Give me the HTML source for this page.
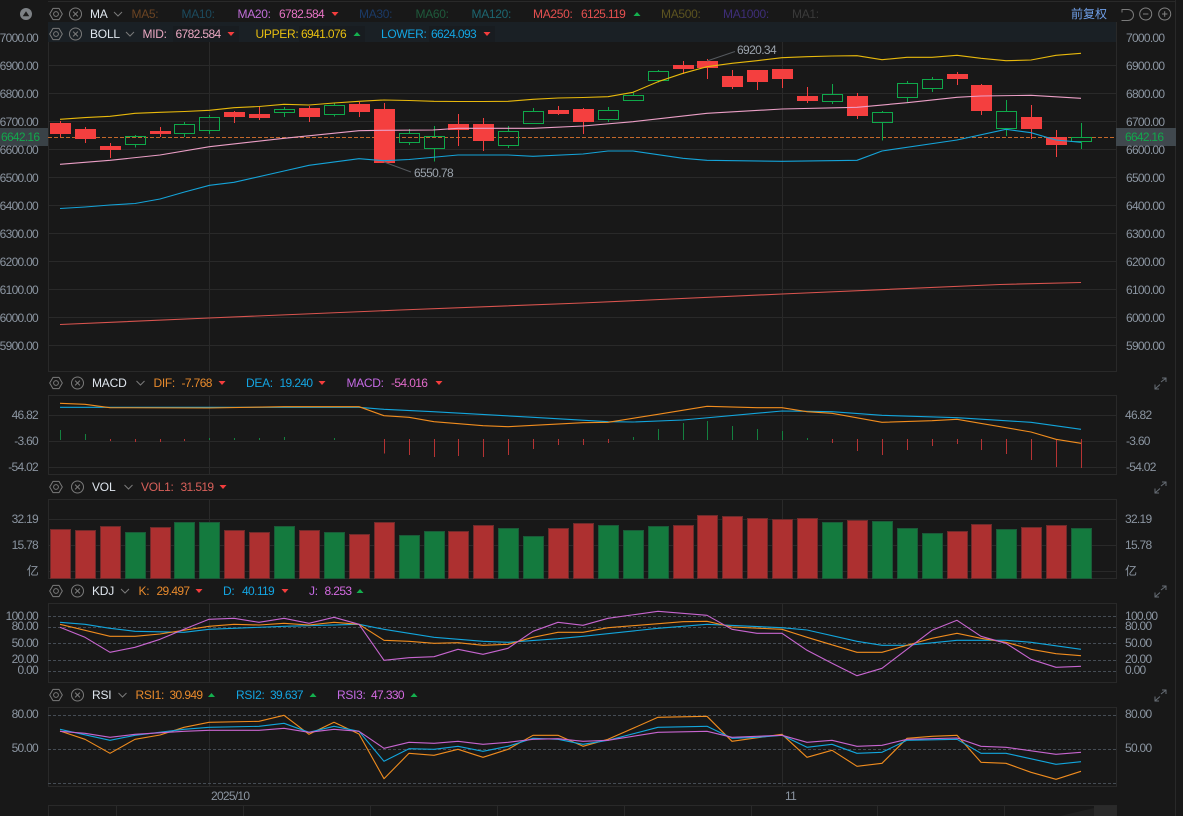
<!DOCTYPE html>
<html><head><meta charset="utf-8"><title>K</title>
<style>
html,body{margin:0;padding:0;background:#181818;width:1183px;height:816px;overflow:hidden}
svg{display:block}
text{font-family:"Liberation Sans","Noto Sans CJK SC",sans-serif;font-size:12px}
.a{fill:#8b95a1;letter-spacing:-.72px}
.e{text-anchor:end}
.n{fill:#dfe6ee;letter-spacing:-.2px}
.l{letter-spacing:-.3px}
.v{letter-spacing:-.62px}
.g{stroke:#292929;stroke-width:1;fill:none;shape-rendering:crispEdges}
.d{stroke:#454c54;stroke-width:1;stroke-dasharray:3 2;fill:none;shape-rendering:crispEdges}
.p{fill:none;stroke-width:1.1;stroke-linejoin:round}
.o{stroke:#f08c1e}.b{stroke:#12a5dc}.m{stroke:#c765cf}
</style></head><body>
<svg width="1183" height="816" viewBox="0 0 1183 816" xmlns="http://www.w3.org/2000/svg">
<defs>
<g id="gear" fill="none" stroke="#7a7a7a" stroke-width="1"><path d="M-3 -5.6 L3 -5.6 L6.3 0 L3 5.6 L-3 5.6 L-6.3 0 Z" stroke-linejoin="round"/><circle r="2.4"/></g>
<g id="close" fill="none" stroke="#7a7a7a" stroke-width="1"><circle r="6"/><path d="M-2.4 -2.4 L2.4 2.4 M2.4 -2.4 L-2.4 2.4"/></g>
<path id="chev" d="M-4 -2 L0 2 L4 -2" fill="none" stroke="#7a7a7a" stroke-width="1"/>
<path id="dn" d="M-3.5 -2 H3.5 L0 2 Z" fill="#f43d3d"/>
<path id="up" d="M-3.5 2 H3.5 L0 -2 Z" fill="#14b04e"/>
<g id="exp" fill="none" stroke="#666d75" stroke-width="1"><path d="M.5 -1.5 L5 -5 M1.5 -5.5 H5.5 V-1.5 M-.5 1 L-5 5 M-5.5 1 V5.5 H-1.5"/></g>
</defs>

<rect width="1183" height="816" fill="#181818"/>
<path class="g" d="M48 1.5H1176M1175.5 0V816" stroke="#222"/>

<!-- BOLL band -->
<rect x="48" y="22" width="1069" height="20" fill="#1a2025"/>
<rect x="173" y="26" width="66" height="16" fill="#181c20"/>
<rect x="299" y="26" width="66" height="16" fill="#181c20"/>
<rect x="429" y="26" width="66" height="16" fill="#181c20"/>

<!-- main grid -->
<path class="g" d="M48.5 42V371M1116.5 22V371M209.5 42V371M782.5 42V371M48 65.5H1116M48 93.5H1116M48 121.5H1116M48 149.5H1116M48 177.5H1116M48 205.5H1116M48 233.5H1116M48 261.5H1116M48 289.5H1116M48 317.5H1116M48 345.5H1116M48 371.5H1117"/>

<!-- price tags -->
<rect x="0" y="128" width="48" height="18" fill="#3a4247"/>
<rect x="1116" y="128" width="60" height="18" fill="#40484e"/>
<path d="M48 137.5H1116" stroke="#c4682a" stroke-width="1" stroke-dasharray="4 2" shape-rendering="crispEdges"/>

<!-- candles -->
<path fill="#f43f3f" shape-rendering="crispEdges" d="M50 123h21v11h-21zM60 121h1v16h-1zM75 129h21v10h-21zM85 127h1v16h-1zM100 146h21v4h-21zM110 143h1v15h-1zM150 131h21v3h-21zM160 127h1v10h-1zM224 112h21v5h-21zM234 111h1v12h-1zM249 114h21v4h-21zM259 107h1v13h-1zM299 108h21v9h-21zM309 106h1v16h-1zM349 104h21v8h-21zM359 102h1v15h-1zM374 109h21v54h-21zM384 103h1v60h-1zM448 124h21v6h-21zM458 114h1v32h-1zM473 124h21v17h-21zM483 118h1v33h-1zM548 110h21v4h-21zM558 106h1v9h-1zM573 109h21v13h-21zM583 108h1v26h-1zM673 65h21v4h-21zM683 61h1v13h-1zM697 61h21v7h-21zM707 59h1v20h-1zM722 76h21v11h-21zM732 70h1v19h-1zM747 70h21v12h-21zM757 70h1v20h-1zM772 69h21v10h-21zM782 69h1v19h-1zM797 96h21v5h-21zM807 87h1v16h-1zM847 96h21v20h-21zM857 93h1v26h-1zM947 74h21v5h-21zM957 72h1v13h-1zM971 85h21v26h-21zM981 84h1v31h-1zM1021 117h21v12h-21zM1031 105h1v34h-1zM1046 137h21v8h-21zM1056 130h1v27h-1z"/>
<path fill="none" stroke="#0fa84a" stroke-width="1" shape-rendering="crispEdges" d="M125.5 136.5h20v8h-20zM135.5 135v1.5M135.5 144.5v3M174.5 124.5h20v9h-20zM184.5 122v2.5M184.5 133.5v3.5M199.5 117.5h20v13h-20zM209.5 115v2.5M209.5 130.5v3.5M274.5 109.5h20v3h-20zM284.5 107v2.5M284.5 112.5v4.5M324.5 105.5h20v9h-20zM334.5 103v2.5M334.5 114.5v2M399.5 133.5h20v9h-20zM409.5 129v4.5M409.5 142.5v2.5M424.5 136.5h20v12h-20zM434.5 126v10.5M434.5 148.5v13M498.5 131.5h20v14h-20zM508.5 126v5.5M508.5 145.5v2.5M523.5 111.5h20v12h-20zM533.5 108v3.5M598.5 110.5h20v9h-20zM608.5 107v3.5M608.5 119.5v2.5M623.5 95.5h20v5h-20zM633.5 92v3.5M648.5 71.5h20v9h-20zM658.5 70v1.5M658.5 80.5v2M822.5 94.5h20v7h-20zM832.5 84v10.5M832.5 101.5v2.5M872.5 112.5h20v10h-20zM882.5 111v1.5M882.5 122.5v18M897.5 83.5h20v14h-20zM907.5 81v2.5M907.5 97.5v4.5M922.5 79.5h20v9h-20zM932.5 77v2.5M932.5 88.5v3.5M996.5 111.5h20v17h-20zM1006.5 100v11.5M1006.5 128.5v7.5M1071.5 137.5h20v4h-20zM1081.5 123v14.5M1081.5 141.5v7.5"/>

<!-- BOLL & MA lines -->
<polyline class="p" stroke="#e8b90c" points="60,119.3 85,117.6 110,116.3 135,113.3 160,112.3 184.5,111.5 209.5,110.3 234,107.7 259,106.5 284,104.3 309,105 334,103 359,101.3 384,100 409,100.5 434,101.3 458,101.5 483,101.5 508,101.3 533,99.3 558,98 583,97.5 608,96.7 633,92.3 658,81.7 683,73.3 707,66.7 732,63.3 757,60.7 782,57.7 807,56.7 832,56 857,55.7 882,59.7 907,57.3 932,57.3 957,55.3 981,58.3 1006,60.7 1031,60 1056,55.3 1081,53.3"/>
<polyline class="p" stroke="#eb9fc6" points="60,164.3 110,160.3 160,155 209.5,146.7 284,138.3 359,130.7 384,130.3 433,130 458,128.3 533,128.3 583,126 633,121.7 707,113.3 782,109 857,107.3 907,102.7 957,97.3 981,96 1031,95.3 1081,98.3"/>
<polyline class="p" stroke="#14a3d8" points="60,208.5 85,207 110,205 135,203.5 160,199 184.5,192 209.5,185.3 234,182.3 284,171 309,165.3 359,158.7 384,160.7 409,159.5 458,155 508,155 533,156.3 583,154 608,151 633,151 683,158.3 707,160.3 782,161.3 857,160.3 882,151 957,140 1006,129.3 1031,132.7 1056,140 1081,142.3"/>
<polyline class="p" stroke="#d9544f" stroke-width="1" points="60,324.5 209,318 400,310 582,303 782,294 1000,284.5 1081,282.5"/>

<!-- annotations -->
<path d="M707 61 L735 51.5 M384 162 L411 172" stroke="#55595e" stroke-width="1" fill="none"/>
<text x="737" y="54" class="v" style="fill:#9aa2ab">6920.34</text>
<text x="414" y="177" class="v" style="fill:#9aa2ab">6550.78</text>

<!-- axis main -->
<g class="a">
<text class="a e" x="38" y="42">7000.00</text><text class="a e" x="38" y="70">6900.00</text><text class="a e" x="38" y="98">6800.00</text><text class="a e" x="38" y="126">6700.00</text><text class="a e" x="38" y="154">6600.00</text><text class="a e" x="38" y="182">6500.00</text><text class="a e" x="38" y="210">6400.00</text><text class="a e" x="38" y="238">6300.00</text><text class="a e" x="38" y="266">6200.00</text><text class="a e" x="38" y="294">6100.00</text><text class="a e" x="38" y="322">6000.00</text><text class="a e" x="38" y="350">5900.00</text>
<text class="a" x="1126" y="42">7000.00</text><text class="a" x="1126" y="70">6900.00</text><text class="a" x="1126" y="98">6800.00</text><text class="a" x="1126" y="126">6700.00</text><text class="a" x="1126" y="154">6600.00</text><text class="a" x="1126" y="182">6500.00</text><text class="a" x="1126" y="210">6400.00</text><text class="a" x="1126" y="238">6300.00</text><text class="a" x="1126" y="266">6200.00</text><text class="a" x="1126" y="294">6100.00</text><text class="a" x="1126" y="322">6000.00</text><text class="a" x="1126" y="350">5900.00</text>
</g>
<text x="1" y="141" style="fill:#12a84c;letter-spacing:-.72px">6642.16</text>
<text x="1125" y="141" style="fill:#12a84c;letter-spacing:-.72px">6642.16</text>

<!-- top bar -->
<circle cx="26" cy="14" r="6" fill="#7d8185"/><path d="M22.7 16.3H29.3L26 11.3Z" fill="#1c1c1c"/>
<use href="#gear" x="56" y="14"/><use href="#close" x="75.5" y="14"/>
<text x="90" y="18" class="n">MA</text><use href="#chev" x="118" y="14"/>
<text x="131.5" y="18" class="l" fill="#6b4423">MA5:</text>
<text x="181.5" y="18" class="l" fill="#1c4b5e">MA10:</text>
<text x="237.5" y="18" class="l" fill="#c06ed8">MA20:</text><text x="279" y="18" class="v" fill="#e774c4">6782.584</text><use href="#dn" x="335" y="14"/>
<text x="359" y="18" class="l" fill="#1b3a66">MA30:</text>
<text x="415.5" y="18" class="l" fill="#1f5a3c">MA60:</text>
<text x="471.5" y="18" class="l" fill="#1d6670">MA120:</text>
<text x="533" y="18" class="l" fill="#e65050">MA250:</text><text x="581" y="18" class="v" fill="#e65050">6125.119</text><use href="#up" x="637" y="14"/>
<text x="661" y="18" class="l" fill="#5c5320">MA500:</text>
<text x="723" y="18" class="l" fill="#3e2e78">MA1000:</text>
<text x="792" y="18" class="l" fill="#3a3a3a">MA1:</text>
<text x="1071" y="18" fill="#6f9fe8">前复权</text>
<path d="M1122 12.5V9.5H1128A5.3 5.3 0 0 1 1128 20.5H1121.5" fill="none" stroke="#7a7a7a" stroke-width="1"/>
<circle cx="1145.7" cy="14" r="6" fill="none" stroke="#808080"/><path d="M1143 14H1148.4" stroke="#808080"/>
<circle cx="1164.7" cy="14" r="6" fill="none" stroke="#808080"/><path d="M1162 14H1167.4M1164.7 11.3V16.7" stroke="#808080"/>

<use href="#gear" x="56" y="34"/><use href="#close" x="75.5" y="34"/>
<text x="90" y="38" class="n">BOLL</text><use href="#chev" x="130" y="34"/>
<text x="142.5" y="38" class="l" fill="#eaa8c2">MID:</text><text x="175.5" y="38" class="v" fill="#eaa8c2">6782.584</text><use href="#dn" x="231" y="34"/>
<text x="255.5" y="38" class="l" fill="#e8bf10">UPPER:</text><text x="301" y="38" class="v" fill="#e8bf10">6941.076</text><use href="#up" x="357" y="34"/>
<text x="381" y="38" class="l" fill="#14a5e2">LOWER:</text><text x="431" y="38" class="v" fill="#14a5e2">6624.093</text><use href="#dn" x="487" y="34"/>

<!-- MACD -->
<use href="#gear" x="56" y="383"/><use href="#close" x="77.5" y="383"/>
<text x="92" y="387" class="n">MACD</text><use href="#chev" x="140.5" y="383"/>
<text x="153.5" y="387" class="l" fill="#e88a2c">DIF:</text><text x="181.5" y="387" class="v" fill="#e88a2c">-7.768</text><use href="#dn" x="222" y="383"/>
<text x="246" y="387" class="l" fill="#14a5e2">DEA:</text><text x="279.5" y="387" class="v" fill="#14a5e2">19.240</text><use href="#dn" x="322" y="383"/>
<text x="346.5" y="387" class="l" fill="#c46ae4">MACD:</text><text x="391" y="387" class="v" fill="#e06ac8">-54.016</text><use href="#dn" x="439" y="383"/>
<use href="#exp" x="1160.5" y="383.5"/>
<path class="g" d="M48 395.5H1116.5M48 415.5H1116M48 441.5H1116M48 467.5H1116M48 474.5H1116.5M48.5 395V475M1116.5 395V475M209.5 395V475M782.5 395V475"/>
<path stroke="#b53333" stroke-width="1" fill="none" shape-rendering="crispEdges" d="M110.5 439V441M135.5 439V442M160.5 439V442M184.5 439V441M384.5 439V453.7M409.5 439V455M434.5 439V457M458.5 439V456M483.5 439V457M508.5 439V455M533.5 439V449M558.5 439V445M583.5 439V445M608.5 439V443M832.5 439V443M857.5 439V451M882.5 439V455M907.5 439V450M932.5 439V446M957.5 439V444M981.5 439V450M1006.5 439V454M1031.5 439V460M1056.5 439V467M1081.5 439V468"/>
<path stroke="#14803f" stroke-width="1" fill="none" shape-rendering="crispEdges" d="M60.5 430V440M85.5 434V440M209.5 438V440M234.5 438V440M259.5 438V440M284.5 437V440M334.5 438V440M633.5 437V440M658.5 429V440M683.5 423V440M707.5 421V440M732.5 426V440M757.5 429V440M782.5 431V440M807.5 438V440"/>
<polyline class="p b" points="60,407.3 359,407.3 384,409.3 433,411.7 533,417.3 608,421.7 633,422 683,420 782,411 807,411.3 832,411.7 882,415.3 957,417.7 1031,422.3 1081,429.3"/>
<polyline class="p o" points="60,403.3 85,404.3 110,407.7 209,408 284,406.7 359,406.7 384,415.7 409,417.3 434,421.7 483,425.7 508,426.7 583,422.7 608,422.3 658,414.3 707,406.3 757,407.7 782,407.7 807,411.7 832,413.3 882,422.3 932,420.7 957,419.3 1031,432 1056,439.3 1081,443.3"/>
<text class="a e" x="38" y="419">46.82</text><text class="a e" x="38" y="445">-3.60</text><text class="a e" x="38" y="471">-54.02</text>
<text class="a" x="1125" y="419">46.82</text><text class="a" x="1126" y="445">-3.60</text><text class="a" x="1126" y="471">-54.02</text>

<!-- VOL -->
<use href="#gear" x="56" y="487"/><use href="#close" x="77.5" y="487"/>
<text x="92" y="491" class="n">VOL</text><use href="#chev" x="128.5" y="487"/>
<text x="141" y="491" class="l" fill="#d8605a">VOL1:</text><text x="180.5" y="491" class="v" fill="#d8605a">31.519</text><use href="#dn" x="223" y="487"/>
<use href="#exp" x="1160.5" y="487.5"/>
<path class="g" d="M48 499.5H1116.5M48 519.5H1116M48 545.5H1116M48 571.5H1116M48 578.5H1116.5M48.5 499V579M1116.5 499V579M209.5 499V579M782.5 499V579"/>
<g shape-rendering="crispEdges" stroke-width="1">
<g fill="#ad3030" stroke="#6f2b2b">
<rect x="50.5" y="529.5" width="20" height="49"/><rect x="75.5" y="530.5" width="20" height="48"/><rect x="100.5" y="526.5" width="20" height="52"/><rect x="150.5" y="527.5" width="20" height="51"/><rect x="224.5" y="530.5" width="20" height="48"/><rect x="249.5" y="532.5" width="20" height="46"/><rect x="299.5" y="530.5" width="20" height="48"/><rect x="349.5" y="534.5" width="20" height="44"/><rect x="374.5" y="522.5" width="20" height="56"/><rect x="448.5" y="531.5" width="20" height="47"/><rect x="473.5" y="525.5" width="20" height="53"/><rect x="548.5" y="528.5" width="20" height="50"/><rect x="573.5" y="523.5" width="20" height="55"/><rect x="673.5" y="525.5" width="20" height="53"/><rect x="697.5" y="515.5" width="20" height="63"/><rect x="722.5" y="516.5" width="20" height="62"/><rect x="747.5" y="518.5" width="20" height="60"/><rect x="772.5" y="519.5" width="20" height="59"/><rect x="797.5" y="518.5" width="20" height="60"/><rect x="847.5" y="520.5" width="20" height="58"/><rect x="947.5" y="531.5" width="20" height="47"/><rect x="971.5" y="524.5" width="20" height="54"/><rect x="1021.5" y="527.5" width="20" height="51"/><rect x="1046.5" y="525.5" width="20" height="53"/>
</g>
<g fill="#147a3e" stroke="#1a5a38">
<rect x="125.5" y="532.5" width="20" height="46"/><rect x="174.5" y="522.5" width="20" height="56"/><rect x="199.5" y="522.5" width="20" height="56"/><rect x="274.5" y="526.5" width="20" height="52"/><rect x="324.5" y="532.5" width="20" height="46"/><rect x="399.5" y="535.5" width="20" height="43"/><rect x="424.5" y="531.5" width="20" height="47"/><rect x="498.5" y="528.5" width="20" height="50"/><rect x="523.5" y="536.5" width="20" height="42"/><rect x="598.5" y="525.5" width="20" height="53"/><rect x="623.5" y="530.5" width="20" height="48"/><rect x="648.5" y="526.5" width="20" height="52"/><rect x="822.5" y="522.5" width="20" height="56"/><rect x="872.5" y="521.5" width="20" height="57"/><rect x="897.5" y="528.5" width="20" height="50"/><rect x="922.5" y="533.5" width="20" height="45"/><rect x="996.5" y="529.5" width="20" height="49"/><rect x="1071.5" y="528.5" width="20" height="50"/>
</g>
</g>
<text class="a e" x="38" y="523">32.19</text><text class="a e" x="38" y="549">15.78</text><text class="a e" x="38" y="575">亿</text>
<text class="a" x="1125" y="523">32.19</text><text class="a" x="1125" y="549">15.78</text><text class="a" x="1125" y="575">亿</text>

<!-- KDJ -->
<use href="#gear" x="56" y="591"/><use href="#close" x="77.5" y="591"/>
<text x="92" y="595" class="n">KDJ</text><use href="#chev" x="125" y="591"/>
<text x="138.5" y="595" class="l" fill="#e88a2c">K:</text><text x="156.5" y="595" class="v" fill="#e88a2c">29.497</text><use href="#dn" x="199" y="591"/>
<text x="223" y="595" class="l" fill="#14a5e2">D:</text><text x="242" y="595" class="v" fill="#14a5e2">40.119</text><use href="#dn" x="285" y="591"/>
<text x="309" y="595" class="l" fill="#c46ae4">J:</text><text x="324.5" y="595" class="v" fill="#d46ae0">8.253</text><use href="#up" x="360" y="591"/>
<use href="#exp" x="1160.5" y="591.5"/>
<path class="g" d="M48 603.5H1116.5M48 682.5H1116.5M48.5 603V683M1116.5 603V683M209.5 603V683M782.5 603V683"/>
<path class="d" d="M48 616.5H1116M48 627.5H1116M48 643.5H1116M48 660.5H1116M48 671.5H1116"/>
<polyline class="p b" points="60,622.3 85,624.3 110,628.3 135,631.3 184,632.3 209,629.3 284,626.3 359,624.3 384,629.3 409,633.3 434,637.3 483,641.3 508,642.3 558,638.7 583,636.3 658,628.3 707,624.3 782,627.7 807,630 857,641.3 882,645.3 907,645.3 957,640.3 1006,640.3 1031,642.3 1081,649.3"/>
<polyline class="p o" points="60,624.3 110,636.3 135,636.3 160,634 209,626.3 234,624.3 259,625 284,623.3 309,625 334,622.3 359,624.3 384,640.3 409,641.3 434,643.3 458,642.7 483,645.3 508,644.3 533,637.3 558,632.3 583,632.3 608,627.7 683,621.7 707,621.3 732,627 782,629.3 807,637.3 857,652.3 882,652.3 932,638.3 957,633.3 981,638.3 1006,642.3 1031,649.3 1056,653.7 1081,655.7"/>
<polyline class="p m" points="60,627.3 85,637.3 110,652.3 135,647.3 160,639.3 184,629.3 209,619.3 234,618.3 259,622.3 284,618.3 309,623.3 334,617.3 359,624.3 384,660.3 409,657.7 434,656.7 458,649.3 483,654.3 508,648.3 533,631.3 558,622.3 583,625.3 608,618.3 658,611.3 707,615.3 732,629.3 757,633.3 782,633.3 807,650.3 832,663.3 857,675.7 882,668.3 932,630.3 957,620.3 981,636.3 1006,643.3 1031,659.3 1056,667.3 1081,666.3"/>
<text class="a e" x="38" y="620">100.00</text><text class="a e" x="38" y="630">80.00</text><text class="a e" x="38" y="647">50.00</text><text class="a e" x="38" y="663">20.00</text><text class="a e" x="38" y="674">0.00</text>
<text class="a" x="1125" y="620">100.00</text><text class="a" x="1125" y="630">80.00</text><text class="a" x="1125" y="647">50.00</text><text class="a" x="1125" y="663">20.00</text><text class="a" x="1125" y="674">0.00</text>

<!-- RSI -->
<use href="#gear" x="56" y="695"/><use href="#close" x="77.5" y="695"/>
<text x="92" y="699" class="n">RSI</text><use href="#chev" x="122.5" y="695"/>
<text x="135.5" y="699" class="l" fill="#e88a2c">RSI1:</text><text x="169.5" y="699" class="v" fill="#e88a2c">30.949</text><use href="#up" x="211.5" y="695"/>
<text x="236" y="699" class="l" fill="#14a5e2">RSI2:</text><text x="270" y="699" class="v" fill="#14a5e2">39.637</text><use href="#up" x="313" y="695"/>
<text x="337" y="699" class="l" fill="#c46ae4">RSI3:</text><text x="371" y="699" class="v" fill="#d46ae0">47.330</text><use href="#up" x="414" y="695"/>
<use href="#exp" x="1160.5" y="695.5"/>
<path class="g" d="M48 707.5H1116.5M48 786.5H1116.5M48.5 707V787M1116.5 707V787M209.5 707V787M782.5 707V787"/>
<path class="d" d="M48 715.5H1116M48 749.5H1116M48 783.5H1116"/>
<polyline class="p o" points="60,731 85,739.3 110,753.3 135,739.3 160,735 184,727.3 209,722.3 259,721.3 284,715.3 309,734.3 334,722.3 359,734 384,778.7 409,753.3 434,755.3 458,749.3 483,757.3 508,749.3 533,735.3 558,735.3 583,746.3 608,739.3 658,717.3 707,716.3 732,741.3 782,734.3 807,757.3 832,750.3 857,766.3 882,763.3 907,738.3 932,736.3 957,735.3 981,762.3 1006,763.3 1031,772.3 1056,779.3 1081,771.3"/>
<polyline class="p b" points="60,729.3 110,740.3 135,735.3 184,729.3 209,727.3 259,726.3 284,723.3 309,732.3 334,726.3 359,731.3 384,761.3 409,748.7 434,749.3 458,746.3 483,751.3 508,746.3 533,738.3 558,739.3 583,744.3 608,740.3 658,727.3 707,726.3 732,738.3 757,737.3 782,735.3 807,747.3 832,744.3 857,753.3 882,752.3 907,740.3 957,739.3 981,753.3 1006,753.3 1056,764.3 1081,761.7"/>
<polyline class="p m" points="60,731.3 85,733.3 110,737.3 135,734.3 184,731.3 209,730.3 259,730.3 284,728.3 309,732.3 334,729.3 359,731.3 384,748.3 409,742.3 434,743.3 458,741.3 483,744.3 508,742.3 533,739.3 558,738.7 583,741.3 608,740.3 658,732.3 707,731.3 732,737.3 782,735.3 807,742.3 832,740.3 857,746.3 882,745.3 907,739.3 957,738 981,746.3 1006,747.3 1056,754.3 1081,752.3"/>
<text class="a e" x="38" y="718">80.00</text><text class="a e" x="38" y="752">50.00</text>
<text class="a" x="1125" y="718">80.00</text><text class="a" x="1125" y="752">50.00</text>

<!-- x axis -->
<text x="211" y="800" class="a">2025/10</text>
<text x="785" y="800" class="a">11</text>
<rect x="1094" y="805" width="22" height="11" fill="#2a2a2a"/>
<path d="M1060 816L1094 808V816Z" fill="#202020"/>
<path class="g" d="M48 805.5H1116.5M48.5 805V816M116.5 805V816M243.5 805V816M370.5 805V816M497.5 805V816M624.5 805V816M751.5 805V816M877.5 805V816M1004.5 805V816M1116.5 805V816"/>
</svg>
</body></html>
